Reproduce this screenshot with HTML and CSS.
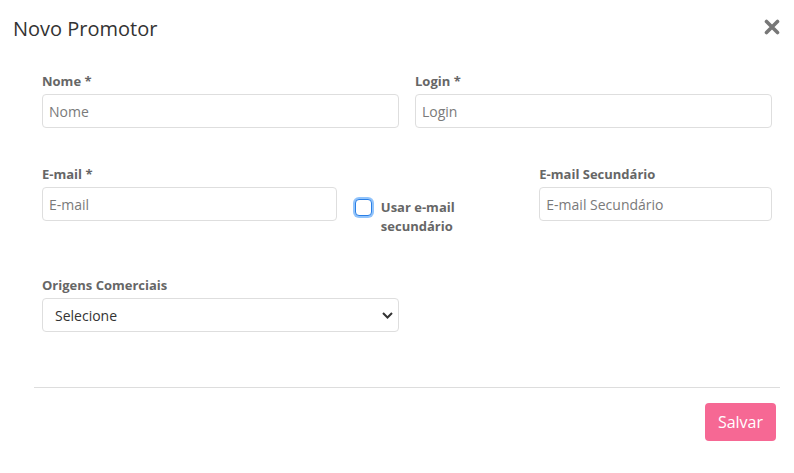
FILE: index.html
```html
<!DOCTYPE html>
<html lang="pt-BR">
<head>
<meta charset="utf-8">
<title>Novo Promotor</title>
<link rel="stylesheet" href="styles.css">
</head>
<body>
<div class="modal">
  <header class="modal-header">
    <h4 class="modal-title">Novo Promotor</h4>
    <button class="close" type="button" aria-label="Fechar">
      <svg width="16" height="16" viewBox="0 0 16 16"><path d="M2.5 2.5 L13.5 13.5 M13.5 2.5 L2.5 13.5" stroke="#777" stroke-width="3.6" stroke-linecap="round" fill="none"/></svg>
    </button>
  </header>
  <div class="modal-body">
    <div class="row">
      <div class="form-group span-6">
        <label class="label">Nome *</label>
        <input class="input" type="text" placeholder="Nome">
      </div>
      <div class="form-group span-6">
        <label class="label">Login *</label>
        <input class="input" type="text" placeholder="Login">
      </div>
    </div>
    <div class="row row-mid">
      <div class="form-group span-5">
        <label class="label">E-mail *</label>
        <input class="input" type="text" placeholder="E-mail">
      </div>
      <div class="form-group span-2 check-col">
        <input class="check" type="checkbox" id="usar">
        <label class="check-label" for="usar">Usar e-mail secundário</label>
      </div>
      <div class="form-group start-9">
        <label class="label">E-mail Secundário</label>
        <input class="input" type="text" placeholder="E-mail Secundário">
      </div>
    </div>
    <div class="row row-last">
      <div class="form-group span-6">
        <label class="label">Origens Comerciais</label>
        <div class="select-wrap">
          <select class="select"><option>Selecione</option></select>
          <svg class="chevron" width="11" height="7" viewBox="0 0 11 7"><path d="M1 1 L5.5 5.5 L10 1" stroke="#333" stroke-width="2" fill="none"/></svg>
        </div>
      </div>
    </div>
  </div>
  <footer class="modal-footer">
    <hr class="divider">
    <div class="actions"><button class="btn-save" type="button">Salvar</button></div>
  </footer>
</div>
</body>
</html>
```

FILE: styles.css
```css
* { box-sizing: border-box; }
html, body { margin: 0; padding: 0; background: #fff; }
body {
  font-family: "Open Sans", "Noto Sans", sans-serif;
  color: #333;
  width: 794px;
  height: 473px;
  overflow: hidden;
}
.modal-header {
  display: flex;
  justify-content: space-between;
  align-items: flex-start;
  padding: 14px 14px 0 13px;
}
.modal-title {
  margin: 0;
  font-size: 20px;
  font-weight: 400;
  line-height: 30px;
  color: #333;
}
.close {
  border: 0;
  background: none;
  padding: 0;
  margin-top: 5px;
  width: 16px;
  height: 16px;
  line-height: 0;
  cursor: pointer;
}
.modal-body {
  padding: 27px 22px 0 42px;
}
.row {
  display: grid;
  grid-template-columns: repeat(12, 1fr);
  column-gap: 16px;
  margin-bottom: 36px;
}
.row-mid { margin-bottom: 39px; }
.row-last { margin-bottom: 0; }
.span-6 { grid-column: span 6; }
.span-5 { grid-column: span 5; }
.span-2 { grid-column: span 2; }
.start-9 { grid-column: 9 / span 4; }
.form-group { display: flex; flex-direction: column; }
.label {
  font-size: 13px;
  font-weight: 700;
  line-height: 20px;
  color: #666;
  margin-bottom: 3px;
}
.input, .select {
  width: 100%;
  height: 34px;
  border: 1px solid #dedede;
  border-radius: 4px;
  font-family: "Open Sans", "Noto Sans", sans-serif;
  font-size: 14px;
  color: #333;
  padding: 0 6px;
  background: #fff;
  outline: none;
}
.input::placeholder { color: #7a7a7a; opacity: 1; }
.select-wrap { position: relative; }
.select {
  appearance: none;
  -webkit-appearance: none;
  padding: 0 12px;
  color: #333;
}
.chevron {
  position: absolute;
  right: 6px;
  top: 14px;
  pointer-events: none;
}
.check-col {
  flex-direction: row;
  align-items: flex-start;
  padding-top: 35px;
}
.check {
  appearance: none;
  -webkit-appearance: none;
  flex: 0 0 auto;
  width: 17px;
  height: 17px;
  margin: 0 0 0 2px;
  border: 1px solid #2a7fe6;
  border-radius: 4px;
  background: #fff;
  box-shadow: 0 0 0 2px rgba(110, 176, 250, 0.75);
}
.check-label {
  margin-left: 9px;
  margin-top: -1px;
  font-size: 13px;
  font-weight: 700;
  line-height: 19px;
  color: #666;
}
.modal-footer { padding-top: 55px; }
.divider {
  margin: 0 14px 0 34px;
  border: 0;
  border-top: 1px solid #dddddd;
}
.actions {
  display: flex;
  justify-content: flex-end;
  padding: 15px 18px 0 0;
}
.btn-save {
  font-family: "Open Sans", "Noto Sans", sans-serif;
  font-size: 16px;
  color: #fff;
  background: #f66894;
  border: 0;
  border-radius: 4px;
  height: 38px;
  padding: 0 13px;
  line-height: 38px;
}
```
